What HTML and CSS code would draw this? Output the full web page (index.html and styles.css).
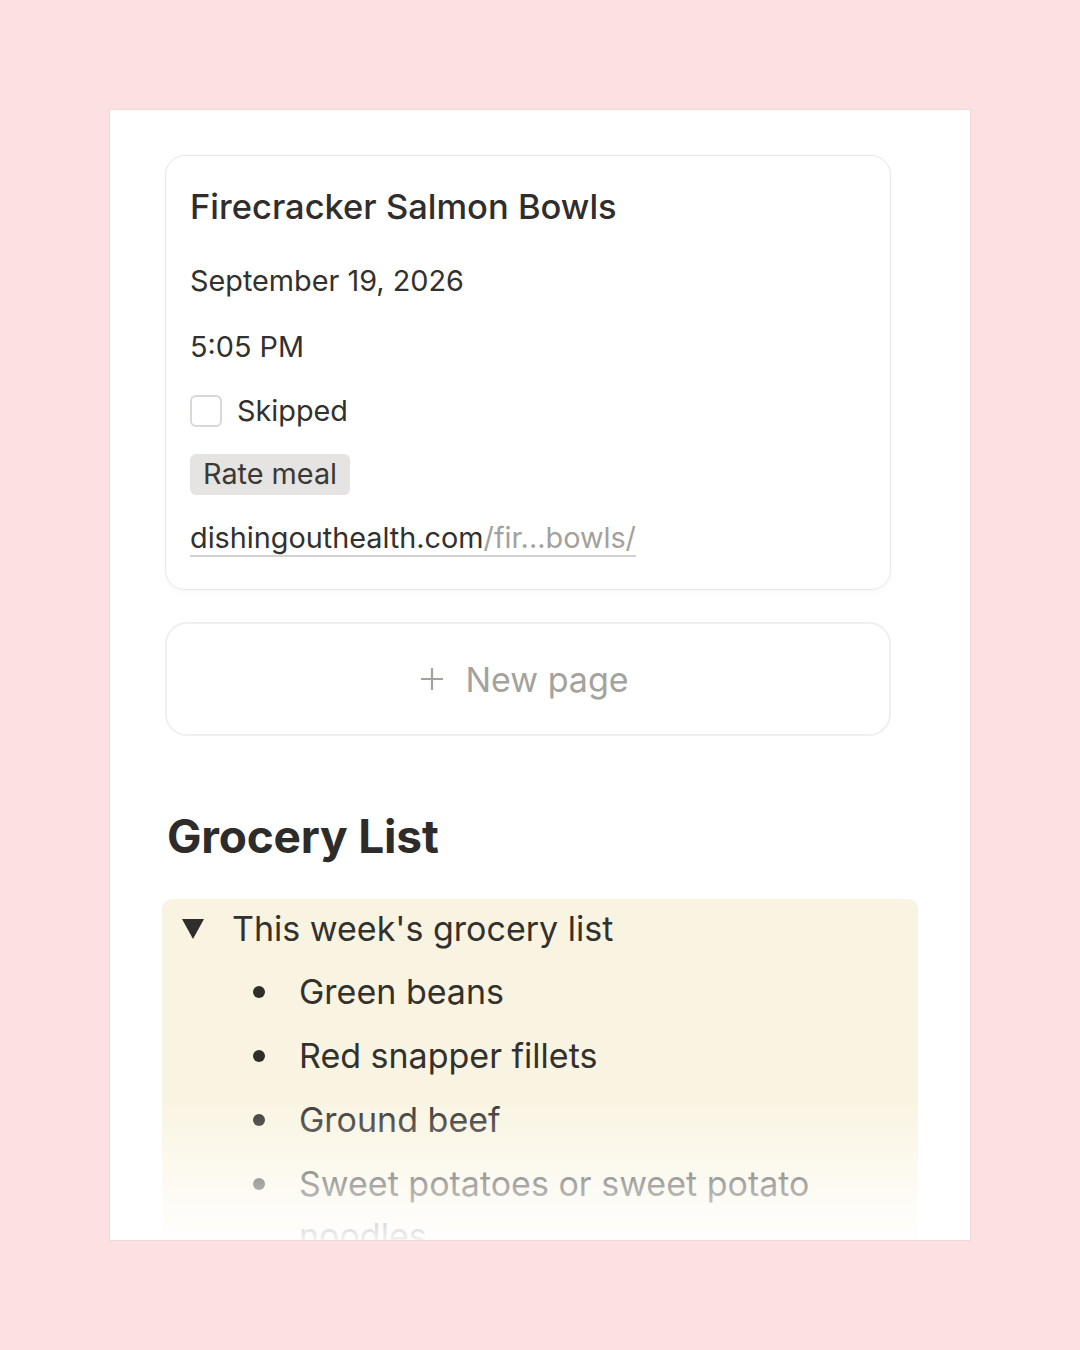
FILE: index.html
```html
<!DOCTYPE html>
<html>
<head>
<meta charset="utf-8">
<link rel="stylesheet" href="styles.css">
</head>
<body>
<div class="panel">
  <div class="card">
    <div class="title">Firecracker Salmon Bowls</div>
    <div class="row r1">September 19, 2026</div>
    <div class="row r2">5:05 PM</div>
    <div class="row r3"><span class="checkbox"></span><span class="check-label">Skipped</span></div>
    <div class="row r4"><span class="tag">Rate meal</span></div>
    <div class="row r5"><span class="link"><span class="host">dishingouthealth.com</span><span class="path">/fir...bowls/</span></span></div>
  </div>
  <div class="newpage">
    <svg class="plus" width="26" height="26" viewBox="0 0 26 26"><path d="M13 2V24M2 13H24" stroke="#a4a29d" stroke-width="2.2" fill="none"/></svg>
    <span>New page</span>
  </div>
  <h2 class="heading">Grocery List</h2>
  <div class="toggle">
    <div class="toggle-head">
      <svg class="tri" width="24" height="22" viewBox="0 0 24 22"><path d="M1 1H23L12 21Z" fill="#2f2e2b"/></svg>
      <span>This week's grocery list</span>
    </div>
    <ul class="items">
      <li>Green beans</li>
      <li>Red snapper fillets</li>
      <li>Ground beef</li>
      <li>Sweet potatoes or sweet potato noodles</li>
    </ul>
  </div>
  <div class="fade"></div>
</div>
</body>
</html>
```
FILE: styles.css
```css
html, body {
  margin: 0;
  padding: 0;
}
body {
  background: #fbe1e1;
  padding-top: 110px;
  height: 1240px;
  font-family: Inter, "Noto Sans", sans-serif;
  color: #32312e;
}
.panel {
  position: relative;
  margin-left: 110px;
  width: 860px;
  height: 1130px;
  box-sizing: border-box;
  background: #fff;
  overflow: hidden;
  padding: 45px 0 0 52px;
  box-shadow: 0 0 0 1px #f4d8d8;
}
.card {
  margin-left: 3px;
  width: 726px;
  box-sizing: border-box;
  border: 1px solid #e8e7e5;
  border-radius: 20px;
  box-shadow: 0 2px 6px rgba(0,0,0,0.035);
  padding: 31px 24px 19px 24px;
}
.title {
  font-size: 34.5px;
  line-height: 40px;
  font-weight: 500;
  color: #2f2e2c;
  margin-bottom: 21px;
}
.row {
  display: flex;
  align-items: center;
  font-size: 28.8px;
  line-height: 34px;
}
.r1 { height: 66px; }
.r2 { height: 65px; }
.r3 { height: 64px; }
.r4 { height: 62px; }
.r5 { height: 65px; }
.checkbox {
  width: 32px;
  height: 32px;
  box-sizing: border-box;
  border: 2px solid #d9d8d5;
  border-radius: 6px;
  margin-right: 15px;
}
.tag {
  display: inline-flex;
  align-items: center;
  height: 41px;
  padding: 0 13px;
  background: #e5e4e2;
  border-radius: 6px;
  color: #3a3935;
}
.link {
  text-decoration: underline;
  text-decoration-color: #d3d2cf;
  text-decoration-thickness: 1.5px;
  text-underline-offset: 7px;
}
.path {
  color: #a3a19c;
}
.newpage {
  margin-top: 32px;
  margin-left: 3px;
  width: 726px;
  height: 114px;
  box-sizing: border-box;
  border: 2px solid #efefee;
  border-radius: 22px;
  display: flex;
  align-items: center;
  justify-content: center;
  gap: 20px;
  font-size: 34px;
  color: #a4a29d;
  padding-right: 8px;
}
.plus {
  display: block;
}
.heading {
  margin: 72px 0 0 5px;
  font-size: 46px;
  line-height: 56px;
  font-weight: 700;
  color: #2d2c2a;
  letter-spacing: -0.2px;
}
.toggle {
  margin-top: 35px;
  width: 756px;
  background: #f9f4e1;
  border-radius: 10px;
  padding-top: 3px;
  font-size: 34px;
  color: #32312e;
}
.toggle-head {
  display: flex;
  align-items: center;
  height: 52px;
  margin-bottom: 6px;
  padding-left: 19px;
}
.tri {
  display: block;
  margin-right: 27px;
  margin-top: 2px;
}
.items {
  list-style: none;
  margin: 0;
  padding: 0 60px 0 137px;
}
.items li {
  position: relative;
  line-height: 52px;
  padding: 6px 0;
}
.items li::before {
  content: "";
  position: absolute;
  left: -46px;
  top: 26px;
  width: 12px;
  height: 12px;
  border-radius: 50%;
  background: #2f2e2b;
}
.fade {
  position: absolute;
  left: 0;
  right: 0;
  bottom: 0;
  height: 145px;
  background: linear-gradient(to bottom, rgba(255,255,255,0) 0%, rgba(255,255,255,0.93) 100%);
  pointer-events: none;
}
```
